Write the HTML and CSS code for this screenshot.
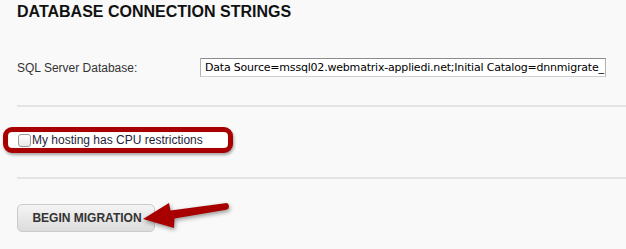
FILE: index.html
```html
<!DOCTYPE html>
<html>
<head>
<meta charset="utf-8">
<link rel="stylesheet" href="styles.css">
</head>
<body>
<div class="page">
  <h2 class="title">DATABASE CONNECTION STRINGS</h2>
  <div class="field-row">
    <label class="field-label" for="sql">SQL Server Database:</label>
    <input class="field-input" id="sql" type="text" value="Data Source=mssql02.webmatrix-appliedi.net;Initial Catalog=dnnmigrate_12345;User ID=dnn">
  </div>
  <div class="divider"></div>
  <div class="highlight">
    <label class="check-label"><input type="checkbox" class="check">My hosting has CPU restrictions</label>
  </div>
  <div class="divider second"></div>
  <div class="actions">
    <button class="btn" type="button">BEGIN MIGRATION</button>
  </div>
  <svg class="arrow" width="626" height="249" viewBox="0 0 626 249">
    <path d="M143 219 L169 203 L170.5 210.5 L225 203.2 A3.2 3.2 0 0 1 226.2 209.8 L174.5 218.5 L174 228 Z" fill="#a80000"/>
  </svg>
</div>
</body>
</html>
```
FILE: styles.css
```css
html, body {
  margin: 0;
  padding: 0;
  background: #f9f9f9;
}
.page {
  position: relative;
  width: 626px;
  height: 249px;
  overflow: hidden;
  font-family: "Liberation Sans", Arial, sans-serif;
}
.title {
  margin: 0 0 0 17px;
  padding-top: 2px;
  font-size: 16px;
  line-height: 20px;
  font-weight: bold;
  color: #111;
}
.field-row {
  display: flex;
  align-items: center;
  margin: 36px 0 0 17px;
}
.field-label {
  width: 183px;
  font-size: 12px;
  line-height: 14px;
  color: #333;
}
.field-input {
  box-sizing: border-box;
  width: 406px;
  height: 19px;
  margin: 0;
  padding: 0 0 0 4px;
  border: 1px solid #b3b3b3;
  border-top-color: #8c8c8c;
  border-bottom-color: #cfcfcf;
  background: #fff;
  font-family: "DejaVu Sans", sans-serif;
  font-size: 11px;
  letter-spacing: -0.2px;
  color: #000;
  outline: none;
}
.divider {
  height: 2px;
  margin: 28px 0 0 17px;
  background: #e4e4e4;
}
.divider.second {
  margin-top: 24px;
}
.highlight {
  box-sizing: border-box;
  width: 230px;
  height: 26px;
  margin: 20px 0 0 3px;
  border: 5px solid #a80000;
  border-radius: 9px;
  background: #fff;
  box-shadow: 1px 2px 3px rgba(0,0,0,0.35), inset 0 0 1px rgba(0,0,0,0.3);
  display: flex;
  align-items: center;
  padding-left: 10px;
}
.check-label {
  display: flex;
  align-items: center;
  font-size: 12px;
  line-height: 14px;
  color: #1f2238;
}
.check {
  appearance: none;
  -webkit-appearance: none;
  box-sizing: border-box;
  width: 13px;
  height: 13px;
  margin: 0 1px 0 0;
  border: 1px solid #9a9a9a;
  border-radius: 3px;
  background: linear-gradient(#fff, #e9e9e9);
}
.actions {
  margin: 25px 0 0 17px;
}
.btn {
  box-sizing: border-box;
  width: 138px;
  height: 28px;
  margin: 0;
  padding: 0 0 0 2px;
  border: 1px solid #cacaca;
  border-radius: 5px;
  background: linear-gradient(#f4f4f4, #dcdcdc);
  font-family: "Liberation Sans", Arial, sans-serif;
  font-size: 12px;
  font-weight: bold;
  color: #333;
}
.arrow {
  position: absolute;
  left: 0;
  top: 0;
  pointer-events: none;
  filter: drop-shadow(1px 2px 2px rgba(0,0,0,0.4));
}
```
